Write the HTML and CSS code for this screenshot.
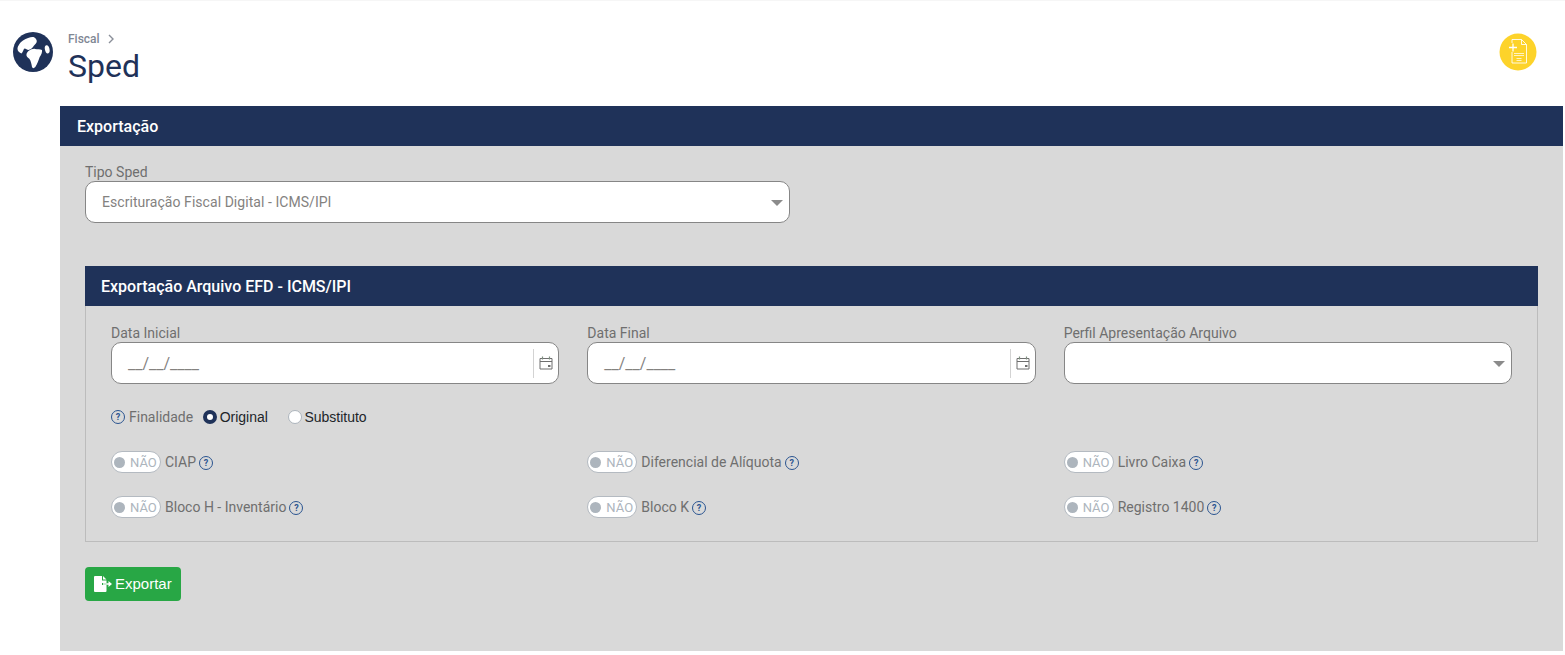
FILE: index.html
```html
<!DOCTYPE html>
<html lang="pt-BR">
<head>
<meta charset="utf-8">
<title>Sped</title>
<link rel="stylesheet" href="styles.css">
</head>
<body>
<header class="top">
  <svg class="globe" viewBox="0 0 40 40" aria-hidden="true">
    <circle cx="20" cy="20" r="20" fill="#1f3259"/>
    <path fill="#fff" d="M4.500 17C4.500 14 7.500 10 10 8.500 C14 6 18 4.500 20.500 5 C23 6 24.500 8.500 23.500 10.500 C22.500 12.500 21 13 20 15 C19 16.500 17 17.500 15.500 18 C14 18 13 16.500 11.500 16.500 C10.500 17 10 20 8.500 21.500 C6.500 21 4.500 19 4.500 17Z"/>
    <path fill="#fff" d="M15.500 19C18 17.500 20.500 16.500 22 17C24.500 17.500 27 17 29 18C29.500 20.500 28 23 26.700 25C25.500 28 24.500 32 22.300 35C21 36.500 19.500 36.500 19 35C18.500 32 18 29 16.300 26.700C14.500 25.500 13 24 13.500 22C14 20.500 14.800 19.500 15.500 19Z"/>
    <ellipse cx="34.200" cy="17.300" rx="2.300" ry="4.200" fill="#fff" transform="rotate(-12 34.200 17.300)"/>
  </svg>
  <div class="titles">
    <div class="crumb"><span>Fiscal</span><svg class="chev" viewBox="0 0 8 10"><path d="M2 1l4 4-4 4" fill="none" stroke="#8a8f99" stroke-width="1.400"/></svg></div>
    <h1>Sped</h1>
  </div>
  <div class="badge">
    <svg viewBox="0 0 38 38" aria-hidden="true">
      <circle cx="19" cy="19" r="18.500" fill="#fdd32a"/>
      <path fill="none" stroke="#fff" stroke-width="1" stroke-opacity=".85" d="M13 10V6.500h9.500l5 5V30H13V19M22.500 6.500v5h5"/>
      <path fill="none" stroke="#fff" stroke-width="1.300" d="M10 14.500h8M14 10.500v8"/>
      <path fill="none" stroke="#fff" stroke-width=".9" stroke-opacity=".8" d="M15 20.500h10M15 22.500h10M17.500 25.500h5M17.500 27.500h5"/>
    </svg>
  </div>
</header>
<main class="panel">
  <h2 class="bar bar-main">Exportação</h2>
  <div class="panel-body">
    <div class="field tipo">
      <label>Tipo Sped</label>
      <div class="control select"><span class="value">Escrituração Fiscal Digital - ICMS/IPI</span><i class="caret"></i></div>
    </div>
    <section class="sub">
      <h3 class="bar">Exportação Arquivo EFD - ICMS/IPI</h3>
      <div class="sub-body">
        <div class="grid">
          <div class="field">
            <label>Data Inicial</label>
            <div class="control"><span class="mask">__/__/____</span>
              <span class="cal"><svg viewBox="0 0 14 14"><path fill="none" stroke="#6f6f6f" d="M1 2.500h12v10.500H1zM1 5.500h12"/><path fill="none" stroke="#7f8f80" stroke-width="1.200" d="M3.500.5v3M10.500.5v3"/><path fill="#6f6f6f" d="M9 9h2.500v2H9z"/></svg></span>
            </div>
          </div>
          <div class="field">
            <label>Data Final</label>
            <div class="control"><span class="mask">__/__/____</span>
              <span class="cal"><svg viewBox="0 0 14 14"><path fill="none" stroke="#6f6f6f" d="M1 2.500h12v10.500H1zM1 5.500h12"/><path fill="none" stroke="#7f8f80" stroke-width="1.200" d="M3.500.5v3M10.500.5v3"/><path fill="#6f6f6f" d="M9 9h2.500v2H9z"/></svg></span>
            </div>
          </div>
          <div class="field">
            <label>Perfil Apresentação Arquivo</label>
            <div class="control select"><i class="caret"></i></div>
          </div>
        </div>
        <div class="finalidade">
          <i class="help">?</i><span class="fin-label">Finalidade</span>
          <span class="radio on"></span><span class="radio-text first">Original</span>
          <span class="radio"></span><span class="radio-text">Substituto</span>
        </div>
        <div class="grid toggles">
          <div class="tg"><span class="switch"><b></b>NÃO</span><span>CIAP</span><i class="help">?</i></div>
          <div class="tg"><span class="switch"><b></b>NÃO</span><span>Diferencial de Alíquota</span><i class="help">?</i></div>
          <div class="tg"><span class="switch"><b></b>NÃO</span><span>Livro Caixa</span><i class="help">?</i></div>
          <div class="tg"><span class="switch"><b></b>NÃO</span><span>Bloco H - Inventário</span><i class="help">?</i></div>
          <div class="tg"><span class="switch"><b></b>NÃO</span><span>Bloco K</span><i class="help">?</i></div>
          <div class="tg"><span class="switch"><b></b>NÃO</span><span>Registro 1400</span><i class="help">?</i></div>
        </div>
      </div>
    </section>
    <button class="export" type="button">
      <svg viewBox="0 0 18 16" aria-hidden="true"><path fill="#fff" d="M1 0h7v4.500h4.500V7H8v2h4.500v6a1 1 0 0 1-1 1H1a1 1 0 0 1-1-1V1a1 1 0 0 1 1-1zM9 0l3.500 3.500H9zM9 7.200h5.500V5l3.500 3-3.500 3V8.800H9z"/></svg>
      <span class="export-text">Exportar</span>
    </button>
  </div>
</main>
</body>
</html>
```

FILE: styles.css
```css
* { box-sizing: border-box; }
html, body { margin: 0; padding: 0; }
body {
  background: #fff;
  font-family: Roboto, "Liberation Sans", sans-serif;
  width: 1565px;
  height: 655px;
  overflow: hidden;
}
.top {
  height: 106px;
  display: flex;
  align-items: flex-start;
  padding: 31px 28px 0 13px;
  border-top: 1px solid #f6f6f6;
}
.globe { width: 40px; height: 40px; flex: none; }
.titles { margin-left: 15px; flex: 1; }
.crumb {
  display: flex;
  align-items: center;
  gap: 7px;
  font-size: 12px;
  line-height: 14px;
  color: #7f8794;
  font-weight: 500;
}
.chev { width: 8px; height: 10px; }
h1 {
  margin: 1px 0 0;
  font-size: 32px;
  line-height: 38px;
  font-weight: 400;
  color: #1f3259;
}
.badge { width: 38px; height: 38px; flex: none; margin-top: 1px; }
.badge svg { width: 38px; height: 38px; display: block; }
.panel {
  margin: 0 2px 0 60px;
  height: 545px;
  background: #d9d9d9;
}
.bar {
  margin: 0;
  height: 40px;
  line-height: 41px;
  background: #1f3259;
  color: #fff;
  font-size: 16px;
  font-weight: 500;
  padding-left: 16px;
}
.bar-main { padding-left: 17px; }
.panel-body { padding: 18px 25px 0; }
label {
  display: block;
  font-size: 14px;
  line-height: 16px;
  margin-bottom: 1px;
  color: #6f6f6f;
}
.control {
  position: relative;
  height: 42px;
  background: #fff;
  border: 1px solid #868686;
  border-radius: 10px;
  display: flex;
  align-items: center;
}
.tipo { width: 705px; height: 102px; }
.value { padding-left: 16px; font-size: 14px; letter-spacing: .05px; color: #84827f; }
.caret {
  position: absolute;
  right: 6px;
  top: 18px;
  width: 0;
  height: 0;
  border-left: 6px solid transparent;
  border-right: 6px solid transparent;
  border-top: 6px solid #8b8b8b;
}
.sub { width: 1453px; }
.sub-body {
  height: 236px;
  border: 1px solid #bcbcbc;
  border-top: 0;
  padding: 19px 25px 0;
}
.grid {
  display: grid;
  grid-template-columns: 1fr 1fr 1fr;
  column-gap: 28px;
}
.mask {
  padding-left: 16px;
  font-size: 16px;
  color: #84827f;
  padding-top: 1px;
}
.cal {
  position: absolute;
  right: 0;
  top: 6px;
  width: 25px;
  height: 29px;
  padding-bottom: 2px;
  border-left: 1px solid #d3d3d3;
  display: flex;
  align-items: center;
  justify-content: center;
}
.cal svg { width: 14px; height: 14px; }
.help {
  display: inline-block;
  flex: none;
  width: 14px;
  height: 14px;
  line-height: 12px;
  border: 1.300px solid #2a5490;
  border-radius: 50%;
  color: #2a5490;
  font-size: 9px;
  font-weight: 700;
  font-style: normal;
  text-align: center;
}
.finalidade {
  display: flex;
  align-items: center;
  margin-top: 24px;
  height: 18px;
  font-size: 14px;
}
.fin-label { color: #6f6f6f; margin-left: 4px; margin-right: 10px; }
.radio {
  width: 14px;
  height: 14px;
  border-radius: 50%;
  background: #fff;
  border: 1px solid #adb5bd;
  flex: none;
}
.radio.on { border: 4px solid #1f3259; }
.radio-text { color: #212529; margin-left: 2.500px; font-family: "Liberation Sans", Arial, sans-serif; }
.radio-text.first { margin-right: 20px; }
.toggles { row-gap: 21px; margin-top: 24px; }
.tg {
  display: flex;
  align-items: center;
  height: 24px;
  font-size: 14px;
  color: #6f6f6f;
}
.tg .help { margin-left: 3px; margin-top: 2px; }
.switch {
  display: flex;
  align-items: center;
  width: 50px;
  height: 22px;
  margin-right: 4px;
  background: #fff;
  border: 1px solid #b4bac1;
  border-radius: 11px;
  color: #adb5bd;
  font-size: 13px;
  flex: none;
  padding-left: 2px;
}
.switch b {
  width: 11px;
  height: 11px;
  border-radius: 50%;
  background: #adb5bd;
  margin-right: 5px;
  flex: none;
}
.export {
  display: flex;
  align-items: center;
  gap: 3px;
  margin-top: 25px;
  width: 96px;
  height: 34px;
  padding: 0 0 0 9px;
  background: #28a745;
  border: 0;
  border-radius: 4px;
  color: #fff;
  font-family: "Liberation Sans", Arial, sans-serif;
  font-size: 15px;
}
.export svg { width: 18px; height: 16px; }
.export-text { position: relative; top: -1px; }
```
